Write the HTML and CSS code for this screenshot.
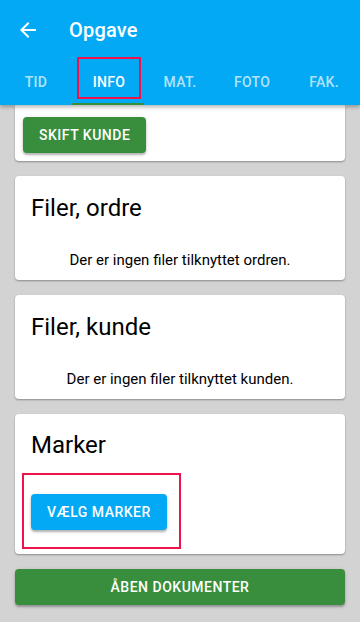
FILE: index.html
```html
<!DOCTYPE html>
<html lang="da">

<head>
  <meta charset="UTF-8" />
  <meta name="viewport" content="width=device-width, initial-scale=1" />
  <title>Opgave</title>
  <link rel="stylesheet" href="styles.css">
</head>

<body>
  <header class="appbar">
    <div class="toolbar">
      <svg class="back" viewBox="0 0 24 24" width="24" height="24">
        <path d="M20 11H7.83l5.59-5.59L12 4l-8 8 8 8 1.41-1.41L7.83 13H20v-2z" fill="#fff" />
      </svg>
      <span class="title">Opgave</span>
    </div>
    <nav class="tabs">
      <div class="tab">TID</div>
      <div class="tab active"><span class="mark">INFO</span></div>
      <div class="tab">MAT.</div>
      <div class="tab">FOTO</div>
      <div class="tab">FAK.</div>
    </nav>
  </header>

  <main class="content">
    <!-- card scrolled partly under the header -->
    <section class="card card-top">
      <button class="btn green">SKIFT KUNDE</button>
    </section>

    <section class="card">
      <h2>Filer, ordre</h2>
      <p class="empty">Der er ingen filer tilknyttet ordren.</p>
    </section>

    <section class="card">
      <h2>Filer, kunde</h2>
      <p class="empty">Der er ingen filer tilknyttet kunden.</p>
    </section>

    <section class="card card-marker">
      <h2>Marker</h2>
      <div class="highlight">
        <button class="btn blue">VÆLG MARKER</button>
      </div>
    </section>

    <button class="btn green wide">ÅBEN DOKUMENTER</button>
  </main>
</body>

</html>
```

FILE: styles.css
```css
body {
  margin: 0;
  background: #d3d3d3;
  font-family: Roboto, 'Noto Sans', sans-serif;
  color: #000;
  height: 622px;
  overflow: hidden;
}

.appbar {
  position: relative;
  z-index: 2;
  background: #03a9f4;
  color: #fff;
  box-shadow: 0 2px 4px rgba(0, 0, 0, 0.3);
}

.toolbar {
  height: 57px;
  display: flex;
  align-items: center;
  padding: 2px 16px 0;
  box-sizing: border-box;
}

.back {
  display: block;
}

.title {
  margin-left: 29px;
  font-size: 20px;
  font-weight: 500;
  letter-spacing: 0.2px;
}

.tabs {
  display: flex;
  height: 48px;
}

.tab {
  flex: 1;
  display: flex;
  justify-content: center;
  align-items: flex-start;
  box-sizing: border-box;
  padding-top: 15px;
  font-size: 14px;
  font-weight: 500;
  line-height: 20px;
  letter-spacing: 0.3px;
  color: rgba(255, 255, 255, 0.7);
  border-bottom: 2px solid transparent;
}

.tab.active {
  color: #fff;
  padding-top: 0;
  border-bottom-color: #388e3c;
}

.tab .mark {
  display: flex;
  justify-content: center;
  box-sizing: border-box;
  width: 64px;
  height: 42px;
  margin-left: 2px;
  padding-top: 13px;
  border: 2px solid #f0114d;
}

.content {
  padding: 0 15px;
  display: flex;
  flex-direction: column;
  gap: 15px;
}

.card {
  background: #fff;
  border-radius: 4px;
  box-shadow: 0 1px 2px rgba(0, 0, 0, 0.35);
  padding: 16px 16px 10px;
}

.card-top {
  border-radius: 0 0 4px 4px;
  padding: 12px 8px 8px;
}

.card h2 {
  margin: 0;
  font-size: 24px;
  font-weight: 400;
  line-height: 32px;
}

.empty {
  margin: 26px 0 0;
  font-size: 15px;
  line-height: 20px;
  text-align: center;
}

.card-marker {
  padding: 15px 16px 5px;
}

.highlight {
  display: inline-block;
  margin: 12px 0 0 -9px;
  padding: 19px 12px 17px 7px;
  border: 2px solid #f0114d;
}

.btn {
  display: block;
  height: 36px;
  padding: 0 16px;
  border: none;
  border-radius: 4px;
  font-family: Roboto, 'Noto Sans', sans-serif;
  font-size: 14px;
  font-weight: 500;
  letter-spacing: 0.5px;
  color: #fff;
  box-shadow: 0 2px 2px rgba(0, 0, 0, 0.24), 0 1px 5px rgba(0, 0, 0, 0.12);
}

.green {
  background: #388e3c;
}

.blue {
  background: #03a9f4;
}

.wide {
  width: 100%;
}
```
